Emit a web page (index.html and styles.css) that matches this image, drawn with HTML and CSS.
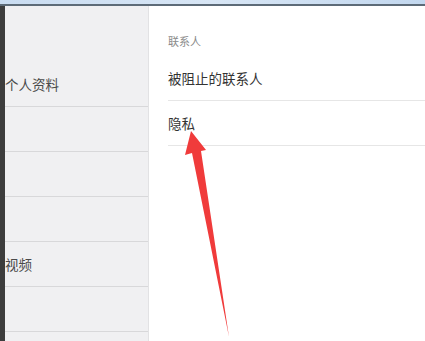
FILE: index.html
```html
<!DOCTYPE html>
<html lang="zh-CN">
<head>
    <meta charset="UTF-8">
    <meta name="viewport" content="width=device-width, initial-scale=1.0">
    <title>设置</title>
    <link rel="stylesheet" href="styles.css">
</head>
<body>
    <div class="titlebar"></div>
    <div class="window">
        <div class="edge"></div>
        <div class="sidebar">
            <div class="side-item">个人资料</div>
            <div class="side-item"></div>
            <div class="side-item"></div>
            <div class="side-item"></div>
            <div class="side-item">视频</div>
            <div class="side-item"></div>
        </div>
        <div class="content">
            <div class="section-title">联系人</div>
            <div class="row">被阻止的联系人</div>
            <div class="row">隐私</div>
        </div>
    </div>

    <svg class="arrow" width="425" height="341" viewBox="0 0 425 341">
        <polygon points="191,131 206,150 201,151 229,337 192,153 185,155" fill="#f03b3b"/>
    </svg>
</body>
</html>
```

FILE: styles.css
```css
body {
    margin: 0;
    width: 425px;
    height: 341px;
    overflow: hidden;
    background: #ffffff;
    font-family: "Noto Sans CJK SC", "Noto Sans", sans-serif;
    position: relative;
}
.titlebar {
    height: 4px;
    background: linear-gradient(to right, #c9dcf1, #d8e6f5 50%, #c3d8ef);
    border-bottom: 2px solid #5d6b78;
}
.window {
    display: flex;
    height: 335px;
}
.edge {
    width: 5px;
    background: #3d3d3d;
}
.sidebar {
    width: 143px;
    background: #f0f0f2;
    border-right: 1px solid #e2e2e4;
    padding-top: 56px;
}
.side-item {
    height: 44px;
    border-bottom: 1px solid #d8d8da;
    display: flex;
    align-items: center;
    font-size: 13.5px;
    color: #4a4a4a;
}
.content {
    flex: 1;
    padding-left: 19px;
}
.section-title {
    font-size: 11px;
    color: #8a8a8a;
    padding-top: 27px;
    height: 23px;
}
.row {
    height: 44px;
    border-bottom: 1px solid #e6e6e6;
    display: flex;
    align-items: center;
    font-size: 13.5px;
    color: #333333;
}
.arrow {
    position: absolute;
    left: 0;
    top: 0;
}
```
